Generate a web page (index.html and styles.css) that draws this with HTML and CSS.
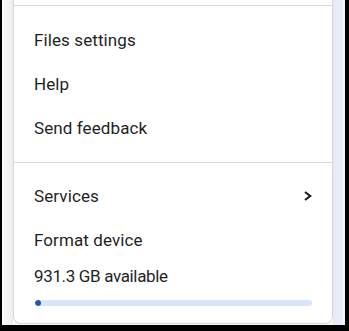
FILE: index.html
```html
<!DOCTYPE html>
<html>
<head>
<meta charset="utf-8">
<link rel="stylesheet" href="styles.css">
</head>
<body>
<div class="frame">
  <div class="gutter-left"></div>
  <div class="card">
    <div class="divider top"></div>
    <div class="group first">
      <div class="item">Files settings</div>
      <div class="item">Help</div>
      <div class="item">Send feedback</div>
    </div>
    <div class="divider"></div>
    <div class="group second">
      <div class="item submenu">
        <span>Services</span>
        <svg class="chev" width="10" height="12" viewBox="0 0 10 12"><polyline points="2,2 7.2,6 2,10" fill="none" stroke="#1f1f1f" stroke-width="2.2"/></svg>
      </div>
      <div class="item">Format device</div>
      <div class="storage">
        <div class="storage-label">931.3 GB available</div>
        <div class="bar"><div class="fill" style="width:6px"></div></div>
      </div>
    </div>
  </div>
  <div class="gutter-right"></div>
</div>
</body>
</html>
```
FILE: styles.css
```css
html, body {
  margin: 0;
  padding: 0;
  background: #000;
}
body {
  width: 349px;
  height: 331px;
  overflow: hidden;
}
.frame {
  display: flex;
  margin-left: 2px;
  width: 343px;
  height: 325px;
  background: #f6f7fa;
}
.gutter-left {
  width: 11px;
  background: linear-gradient(to right, #fbfbfb, #ededee);
}
.gutter-right {
  width: 10px;
  background: linear-gradient(to right, #e6e9f1, #eaeefa);
}
.card {
  width: 320px;
  height: 324px;
  box-sizing: border-box;
  background: #fff;
  border: 1px solid #d6d7da;
  border-top: none;
  border-radius: 0 0 8px 8px;
  font-family: Roboto, "Noto Sans", sans-serif;
  font-size: 17px;
  letter-spacing: 0.1px;
  color: #1f1f1f;
  display: flex;
  flex-direction: column;
}
.divider {
  height: 1px;
  background: #d9dadd;
}
.divider.top {
  margin-top: 5px;
}
.group.first {
  padding: 12px 0 12px;
}
.group.second {
  padding-top: 11px;
}
.item {
  height: 44px;
  display: flex;
  align-items: center;
  padding: 0 0 0 20px;
}
.submenu {
  justify-content: space-between;
  padding-right: 19px;
}
.storage {
  padding: 3px 20px 0 20px;
}
.storage-label {
  height: 22px;
  line-height: 22px;
  letter-spacing: -0.35px;
}
.bar {
  margin-top: 13px;
  margin-left: 1px;
  height: 6px;
  border-radius: 3px;
  background: #d9e5f8;
  overflow: hidden;
}
.fill {
  height: 6px;
  border-radius: 3px;
  background: #1f5aa6;
}
```
